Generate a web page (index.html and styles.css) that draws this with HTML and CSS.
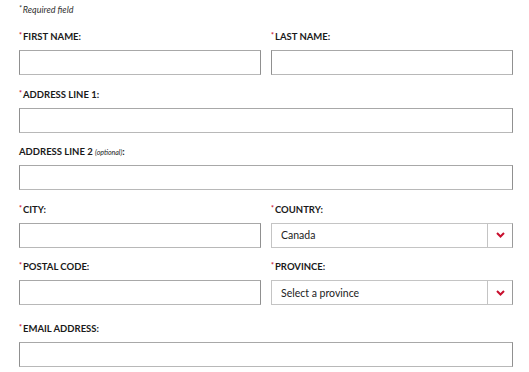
FILE: index.html
```html
<!DOCTYPE html>
<html>
<head>
    <title>Address form</title>
    <link rel="stylesheet" href="styles.css">
</head>
<body>
    <form class="address-form">
        <p class="required-note"><span class="star">*</span>Required field</p>

        <div class="row two">
            <div class="field">
                <label for="first"><span class="star">*</span>FIRST NAME:</label>
                <input type="text" id="first">
            </div>
            <div class="field">
                <label for="last"><span class="star">*</span>LAST NAME:</label>
                <input type="text" id="last">
            </div>
        </div>

        <div class="row">
            <div class="field">
                <label for="addr1"><span class="star">*</span>ADDRESS LINE 1:</label>
                <input type="text" id="addr1">
            </div>
        </div>

        <div class="row">
            <div class="field">
                <label for="addr2">ADDRESS LINE 2 <em class="optional">(optional)</em>:</label>
                <input type="text" id="addr2">
            </div>
        </div>

        <div class="row two">
            <div class="field">
                <label for="city"><span class="star">*</span>CITY:</label>
                <input type="text" id="city">
            </div>
            <div class="field">
                <label for="country"><span class="star">*</span>COUNTRY:</label>
                <div class="select-box">
                    <span class="select-value">Canada</span>
                    <span class="select-arrow">
                        <svg width="9" height="6" viewBox="0 0 9 6"><path d="M1 1 L4.5 4.5 L8 1" fill="none" stroke="#c8102e" stroke-width="2"/></svg>
                    </span>
                </div>
            </div>
        </div>

        <div class="row two">
            <div class="field">
                <label for="postal"><span class="star">*</span>POSTAL CODE:</label>
                <input type="text" id="postal">
            </div>
            <div class="field">
                <label for="province"><span class="star">*</span>PROVINCE:</label>
                <div class="select-box">
                    <span class="select-value">Select a province</span>
                    <span class="select-arrow">
                        <svg width="9" height="6" viewBox="0 0 9 6"><path d="M1 1 L4.5 4.5 L8 1" fill="none" stroke="#c8102e" stroke-width="2"/></svg>
                    </span>
                </div>
            </div>
        </div>

        <div class="row email-row">
            <div class="field">
                <label for="email"><span class="star">*</span>EMAIL ADDRESS:</label>
                <input type="text" id="email">
            </div>
        </div>
    </form>
</body>
</html>
```

FILE: styles.css
```css
body {
    margin: 0;
    background: #ffffff;
    font-family: Lato, "Liberation Sans", sans-serif;
    color: #222222;
}

.address-form {
    width: 494px;
    padding: 4px 0 0 19px;
}

.required-note {
    margin: 0 0 14px 0;
    font-size: 9px;
    font-style: italic;
    line-height: 12px;
    color: #333333;
}

.star {
    color: #c8102e;
    font-size: 7px;
    line-height: 0;
    vertical-align: 2px;
    margin-right: 1px;
}

.required-note .star {
    color: #333333;
}

.row {
    margin-bottom: 12.5px;
}

.row.two {
    display: grid;
    grid-template-columns: 242px 242px;
    column-gap: 10px;
}

.email-row {
    margin-top: 16.5px;
}

.field label {
    display: block;
    font-size: 9.5px;
    font-weight: bold;
    line-height: 14px;
    margin-bottom: 6px;
    color: #1a1a1a;
}

.optional {
    font-size: 7px;
    font-weight: normal;
    line-height: 0;
}

.field input {
    display: block;
    box-sizing: border-box;
    width: 100%;
    height: 25px;
    margin: 0;
    border: 1px solid #909090;
    border-top-color: #a8a8a8;
    border-bottom-color: #b8b8b8;
    background: #ffffff;
}

.select-box {
    box-sizing: border-box;
    height: 25px;
    display: flex;
    align-items: stretch;
    border: 1px solid #c4c4c4;
    border-right-color: #9a9a9a;
    background: #ffffff;
}

.select-value {
    flex: 1;
    display: flex;
    align-items: center;
    padding-left: 9px;
    font-size: 10.5px;
    color: #222222;
}

.select-arrow {
    width: 24px;
    border-left: 1px solid #c4c4c4;
    display: flex;
    align-items: center;
    justify-content: center;
}
```
